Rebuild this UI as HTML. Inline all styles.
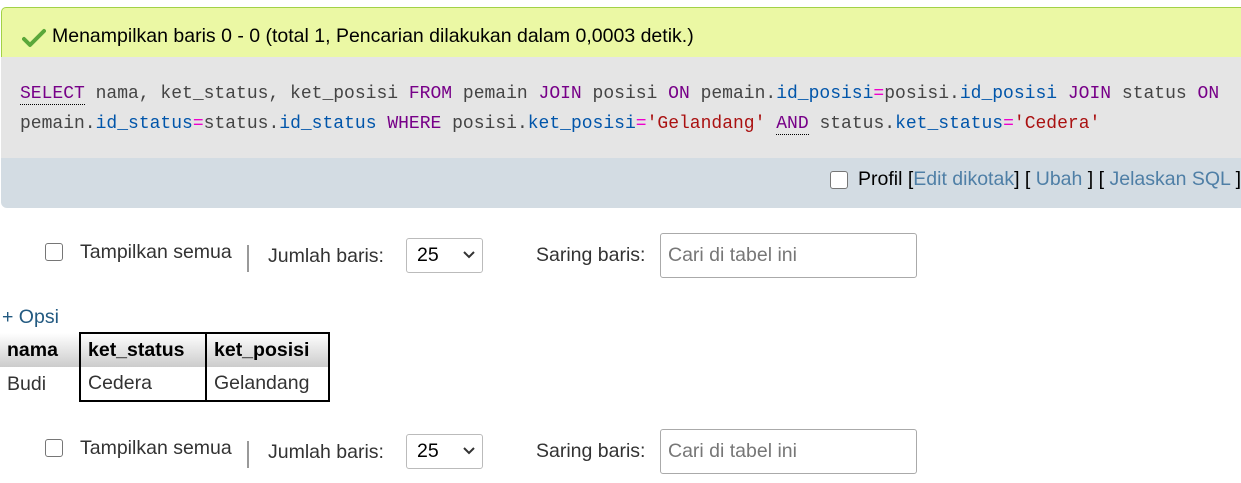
<!DOCTYPE html>
<html><head><meta charset="utf-8"><style>
body{margin:0;width:1241px;height:483px;overflow:hidden;background:#fff;font-family:"Liberation Sans",Arial,sans-serif;font-size:19.5px;color:#333;position:relative}
.a{position:absolute;white-space:nowrap}
.msg{left:1px;top:7px;width:1260px;height:50px;background:#ebf8a4;border:1px solid #a2d246;border-bottom:none;border-radius:5px 5px 0 0;box-sizing:border-box}
.sql{left:1px;top:57px;width:1260px;height:101px;background:#e5e5e5}
.bar{left:1px;top:158px;width:1260px;height:50px;background:#d3dce3;border-radius:0 0 0 6px}
.mono{font-family:"Liberation Mono",monospace;font-size:18px;color:#444;line-height:30px}
.k{color:#770088}.v{color:#0055aa}.o{color:#ee00cc}.s{color:#aa1111}
.lnk{color:#4f7fa6}
.cb{width:16px;height:16px;border:1px solid #767676;border-radius:3px;background:#fff}
.sel{width:77px;height:35px;border:1px solid #bbb;border-radius:3px;box-sizing:border-box;background:#fff}
.inp{width:257px;height:45px;border:1px solid #aaa;border-radius:3px;box-sizing:border-box;background:#fff;color:#777;padding:10px 7px}
th,td{font-size:19.5px;padding:0 7px;text-align:left;height:33px}
</style></head><body>
<div class="a msg"></div>
<svg class="a" style="left:22px;top:28px" width="24" height="20" viewBox="0 0 24 20"><path d="M2 11 L8 17 L22 3" fill="none" stroke="#5aa83a" stroke-width="4" stroke-linecap="round" stroke-linejoin="round"/></svg>
<div class="a" style="left:52px;top:25px;color:#000">Menampilkan baris 0 - 0 (total 1, Pencarian dilakukan dalam 0,0003 detik.)</div>
<div class="a sql"></div>
<div class="a mono" style="left:20px;top:79px"><span class="k" style="border-bottom:1px dotted #000">SELECT</span> nama, ket_status, ket_posisi <span class="k">FROM</span> pemain <span class="k">JOIN</span> posisi <span class="k">ON</span> pemain.<span class="v">id_posisi</span><span class="o">=</span>posisi.<span class="v">id_posisi</span> <span class="k">JOIN</span> status <span class="k">ON</span><br>pemain.<span class="v">id_status</span><span class="o">=</span>status.<span class="v">id_status</span> <span class="k">WHERE</span> posisi.<span class="v">ket_posisi</span><span class="o">=</span><span class="s">'Gelandang'</span> <span class="k" style="border-bottom:1px dotted #000">AND</span> status.<span class="v">ket_status</span><span class="o">=</span><span class="s">'Cedera'</span></div>
<div class="a bar"></div>
<div class="a cb" style="left:830px;top:171px"></div>
<div class="a" style="left:858px;top:168px;color:#000">Profil [<span class="lnk">Edit dikotak</span>] [ <span class="lnk">Ubah</span> ] [ <span class="lnk">Jelaskan SQL</span> ]</div>

<div class="a cb" style="left:45px;top:243px"></div>
<div class="a" style="left:80px;top:241px">Tampilkan semua</div>
<div class="a" style="left:247px;top:245px;width:2px;height:27px;background:#999"></div>
<div class="a" style="left:268px;top:245px">Jumlah baris:</div>
<div class="a sel" style="left:406px;top:238px"></div>
<div class="a" style="left:417px;top:244px;color:#000">25</div>
<svg class="a" style="left:463px;top:251px" width="12" height="8"><path d="M1 1 L6 6 L11 1" fill="none" stroke="#333" stroke-width="2"/></svg>
<div class="a" style="left:536px;top:244px">Saring baris:</div>
<div class="a inp" style="left:660px;top:233px">Cari di tabel ini</div>

<div class="a lnk" style="left:2px;top:306px;color:#235a81">+ Opsi</div>
<table class="a" style="left:0;top:332px;border-collapse:collapse">
<tr style="background:linear-gradient(#fff,#ccc)"><th style="width:65px;color:#000">nama</th><th style="width:110px;border:2px solid #000;border-bottom:none;color:#000">ket_status</th><th style="width:107px;border:2px solid #000;border-bottom:none;color:#000">ket_posisi</th></tr>
<tr><td>Budi</td><td style="border:2px solid #000;border-top:none">Cedera</td><td style="border:2px solid #000;border-top:none">Gelandang</td></tr>
</table>

<div class="a cb" style="left:45px;top:439px"></div>
<div class="a" style="left:80px;top:437px">Tampilkan semua</div>
<div class="a" style="left:247px;top:441px;width:2px;height:27px;background:#999"></div>
<div class="a" style="left:268px;top:441px">Jumlah baris:</div>
<div class="a sel" style="left:406px;top:434px"></div>
<div class="a" style="left:417px;top:440px;color:#000">25</div>
<svg class="a" style="left:463px;top:447px" width="12" height="8"><path d="M1 1 L6 6 L11 1" fill="none" stroke="#333" stroke-width="2"/></svg>
<div class="a" style="left:536px;top:440px">Saring baris:</div>
<div class="a inp" style="left:660px;top:429px">Cari di tabel ini</div>
</body></html>
